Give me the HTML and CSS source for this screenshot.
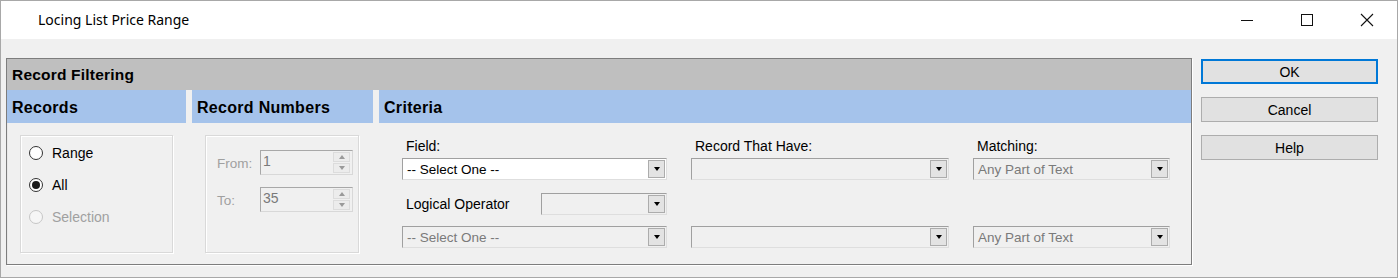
FILE: index.html
```html
<!DOCTYPE html>
<html lang="en">
<head>
  <meta charset="UTF-8" />
  <title>Locing List Price Range</title>
  <link rel="stylesheet" href="styles.css">
</head>
<body>
  <div class="window">
    <div class="titlebar">
      <span class="title">Locing List Price Range</span>
      <div class="caption-btns">
        <span class="cap-btn"><svg width="16" height="16" viewBox="0 0 16 16"><path d="M2 8.5h12" stroke="#111" stroke-width="1"/></svg></span>
        <span class="cap-btn"><svg width="16" height="16" viewBox="0 0 16 16"><rect x="2.5" y="2.5" width="11" height="11" fill="none" stroke="#111" stroke-width="1"/></svg></span>
        <span class="cap-btn"><svg width="16" height="16" viewBox="0 0 16 16"><path d="M2 2l12 12M14 2L2 14" stroke="#111" stroke-width="1.1"/></svg></span>
      </div>
    </div>

    <div class="content">
      <div class="panel">
        <div class="panel-title">Record Filtering</div>
        <div class="sections">
          <!-- Records -->
          <div class="section records">
            <div class="sec-head">Records</div>
            <div class="group">
              <label class="radio"><span class="dot"></span>Range</label>
              <label class="radio"><span class="dot checked"></span>All</label>
              <label class="radio disabled"><span class="dot"></span>Selection</label>
            </div>
          </div>

          <!-- Record Numbers -->
          <div class="section numbers">
            <div class="sec-head">Record Numbers</div>
            <div class="group">
              <div class="spin-row">
                <span class="spin-label">From:</span>
                <div class="spin"><span class="spin-val">1</span><span class="spin-btns"><i class="up"></i><i class="down"></i></span></div>
              </div>
              <div class="spin-row">
                <span class="spin-label">To:</span>
                <div class="spin"><span class="spin-val">35</span><span class="spin-btns"><i class="up"></i><i class="down"></i></span></div>
              </div>
            </div>
          </div>

          <!-- Criteria -->
          <div class="section criteria">
            <div class="sec-head">Criteria</div>
            <div class="crit-grid">
              <span class="crit-label">Field:</span>
              <span class="crit-label">Record That Have:</span>
              <span class="crit-label">Matching:</span>

              <div class="combo active top"><span class="combo-text">-- Select One --</span><span class="drop"></span></div>
              <div class="combo top"><span class="combo-text"></span><span class="drop"></span></div>
              <div class="combo top"><span class="combo-text">Any Part of Text</span><span class="drop"></span></div>

              <div class="logical">
                <span class="logical-label">Logical Operator</span>
                <div class="combo small"><span class="combo-text"></span><span class="drop"></span></div>
              </div>
              <span></span>
              <span></span>

              <div class="combo"><span class="combo-text">-- Select One --</span><span class="drop"></span></div>
              <div class="combo"><span class="combo-text"></span><span class="drop"></span></div>
              <div class="combo"><span class="combo-text">Any Part of Text</span><span class="drop"></span></div>
            </div>
          </div>
        </div>
      </div>

      <div class="buttons">
        <button class="btn default">OK</button>
        <button class="btn">Cancel</button>
        <button class="btn">Help</button>
      </div>
    </div>
  </div>
</body>
</html>
```

FILE: styles.css
```css
* {
  box-sizing: border-box;
}
body {
  margin: 0;
  font-family: "Liberation Sans", Arial, sans-serif;
  font-size: 13.5px;
  color: #000;
}
.window {
  width: 1398px;
  height: 278px;
  border: 1px solid #a8a8a8;
  background: #f0f0f0;
  overflow: hidden;
}

/* title bar */
.titlebar {
  height: 38px;
  background: #fff;
  display: flex;
  align-items: center;
  justify-content: space-between;
}
.title {
  font-family: "Noto Sans", "Open Sans", sans-serif;
  font-size: 14px;
  padding-left: 37px;
  padding-bottom: 1px;
}
.caption-btns {
  display: flex;
}
.cap-btn {
  width: 60px;
  height: 30px;
  display: flex;
  align-items: center;
  justify-content: center;
}

/* body */
.content {
  display: flex;
  padding: 19px 0 0 5px;
}
.panel {
  width: 1186px;
  height: 207px;
  border: 1px solid #7d7d7d;
  box-shadow: 1px 1px 0 #fff, inset 1px 1px 0 #e8e8e8;
}
.panel-title {
  height: 31px;
  background: #bfbfbf;
  font-weight: bold;
  font-size: 15.5px;
  padding: 7px 0 0 5px;
  letter-spacing: 0.2px;
}
.sections {
  display: flex;
  gap: 6px;
}
.sec-head {
  height: 33px;
  background: #a5c3eb;
  font-weight: bold;
  font-size: 16px;
  padding: 9px 0 0 5px;
  letter-spacing: 0.3px;
}
.records {
  width: 179px;
}
.numbers {
  width: 181px;
}
.criteria {
  flex: 1;
}

/* group boxes */
.group {
  margin: 12px 13px 0 13px;
  height: 118px;
  border: 1px solid #d9d9d9;
  box-shadow: inset 1px 1px 0 #fff, 1px 1px 0 #fff;
}
.records .group {
  padding: 7px 0 0 8px;
  display: flex;
  flex-direction: column;
  gap: 13px;
}
.radio {
  display: flex;
  align-items: center;
  gap: 9px;
  height: 19px;
  font-size: 14px;
}
.radio.disabled {
  color: #a0a0a0;
}
.dot {
  width: 14px;
  height: 14px;
  border-radius: 50%;
  border: 1px solid #333;
  background: #fff;
  display: flex;
  align-items: center;
  justify-content: center;
}
.dot.checked::after {
  content: "";
  width: 8px;
  height: 8px;
  border-radius: 50%;
  background: #1a1a1a;
}
.disabled .dot {
  border-color: #c6c6c6;
  background: #f6f6f6;
}

/* spin boxes */
.numbers .group {
  margin-right: 14px;
  padding: 14px 0 0 11px;
  display: flex;
  flex-direction: column;
  gap: 12px;
}
.spin-row {
  display: flex;
  align-items: center;
}
.spin-label {
  width: 43px;
  color: #a0a0a0;
  font-size: 13.5px;
  padding-top: 2px;
}
.spin {
  width: 93px;
  height: 25px;
  border: 1px solid #a8a8a8;
  border-right-color: #d8d8d8;
  border-bottom-color: #d8d8d8;
  display: flex;
  justify-content: space-between;
  padding: 1px 2px 1px 2px;
  color: #7a7a7a;
}
.spin-val {
  font-size: 14px;
  padding-top: 1px;
}
.spin-btns {
  width: 17px;
  display: flex;
  flex-direction: column;
  gap: 1px;
}
.spin-btns i {
  flex: 1;
  background: #ececec;
  border: 1px solid #dcdcdc;
  display: flex;
  align-items: center;
  justify-content: center;
}
.spin-btns .up::after {
  content: "";
  border: 3px solid transparent;
  border-top: 0;
  border-bottom: 4px solid #9a9a9a;
}
.spin-btns .down::after {
  content: "";
  border: 3px solid transparent;
  border-bottom: 0;
  border-top: 4px solid #9a9a9a;
}

/* criteria */
.crit-grid {
  display: grid;
  grid-template-columns: 265px 258px 197px;
  grid-template-rows: 35px 35px 33px 22px;
  column-gap: 24px;
  padding-left: 23px;
}
.crit-label {
  align-self: end;
  padding: 0 0 4px 4px;
  font-size: 14px;
}
.combo.top,
.logical {
  align-self: start;
}
.logical {
  height: 22px;
  display: flex;
  align-items: center;
  justify-content: space-between;
}
.logical-label {
  padding-left: 4px;
  font-size: 14px;
}
.combo {
  height: 22px;
  background: #f0f0f0;
  border: 1px solid #a0a0a0;
  border-right-color: #dedede;
  border-bottom-color: #dedede;
  display: flex;
  align-items: center;
  justify-content: space-between;
  padding: 0 1px 0 4px;
  color: #7a7a7a;
}
.combo.active {
  background: #fff;
  color: #000;
}
.combo.small {
  width: 126px;
}
.combo-text {
  padding-top: 1px;
}
.drop {
  width: 17px;
  height: 18px;
  background: #e3e3e3;
  border: 1px solid #acacac;
  display: flex;
  align-items: center;
  justify-content: center;
}
.drop::after {
  content: "";
  border: 3px solid transparent;
  border-bottom: 0;
  border-top: 4px solid #000;
}

/* buttons */
.buttons {
  width: 177px;
  margin-left: 9px;
  padding-top: 1px;
  display: flex;
  flex-direction: column;
  gap: 13px;
}
.btn {
  height: 25px;
  background: #e1e1e1;
  border: 1px solid #adadad;
  font-family: "Liberation Sans", Arial, sans-serif;
  font-size: 14px;
  color: #000;
  padding: 0;
}
.btn.default {
  border: 2px solid #0078d7;
}
```
